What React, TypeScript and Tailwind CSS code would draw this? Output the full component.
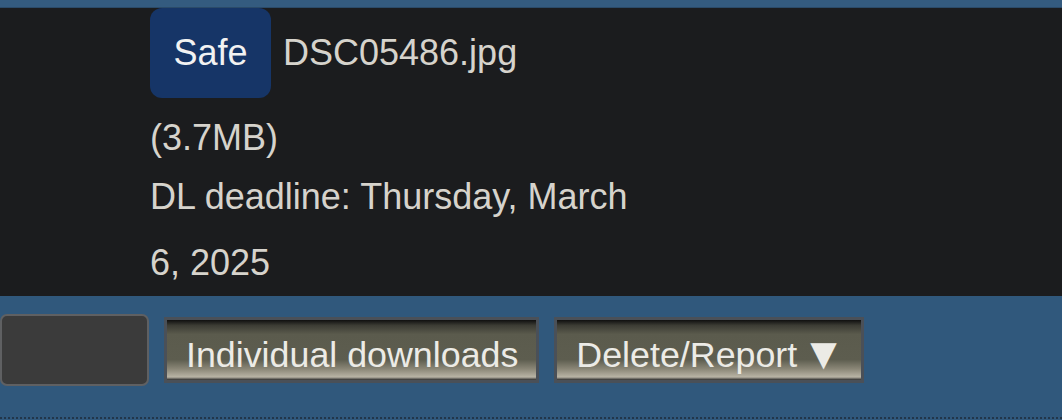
export default function App() {
  const font = { fontFamily: '"Liberation Sans", Arial, sans-serif' };

  return (
    <div className="w-[1062px] h-[420px] overflow-hidden bg-[#30587c]" style={font}>
      {/* top strip */}
      <div className="h-[8px] bg-[#345b7f] border-b border-[#2b4a68]" />

      {/* file panel */}
      <div className="h-[288px] bg-[#1b1c1e] pl-[150px] text-[36px] text-[#d6d3cc]">
        <div className="flex items-center h-[90px]">
          <span className="flex items-center justify-center h-[90px] w-[121px] rounded-[12px] bg-[#163567] text-[#f2f2f2]">
            Safe
          </span>
          <span className="ml-[12px]">DSC05486.jpg</span>
        </div>
        <div className="mt-[14px] leading-[52px]">(3.7MB)</div>
        <p className="w-[500px] leading-[66px]">DL deadline: Thursday, March 6, 2025</p>
      </div>

      {/* actions */}
      <div className="h-[121px] flex items-center gap-[15px] pb-[14px]">
        <div className="w-[149px] h-[72px] rounded-[7px] border-2 border-[#5f6062] bg-[#3b3b3b]" />
        <button className="h-[66px] pl-[19px] pr-[18px] pt-[10px] leading-[50px] text-[35.8px] text-[#ecebe6] border-[3px] border-[#4a5058] bg-[linear-gradient(to_bottom,#0f0f0f_0%,#3c3c34_9%,#5b5b4d_24%,#5d5d4f_66%,#8c8878_82%,#b9b4a5_95%,#2c2c2c_100%)]">
          Individual downloads
        </button>
        <button className="h-[66px] pl-[19px] pr-[15px] pt-[10px] leading-[50px] text-[35.8px] text-[#ecebe6] border-[3px] border-[#4a5058] bg-[linear-gradient(to_bottom,#0f0f0f_0%,#3c3c34_9%,#5b5b4d_24%,#5d5d4f_66%,#8c8878_82%,#b9b4a5_95%,#2c2c2c_100%)]">
          Delete/Report<span className="inline-block ml-[4px] text-[45px] leading-[0] align-[-2px]">▼</span>
        </button>
      </div>

      {/* dotted divider */}
      <div className="border-t-2 border-dotted border-[#22364a]" />
    </div>
  );
}
